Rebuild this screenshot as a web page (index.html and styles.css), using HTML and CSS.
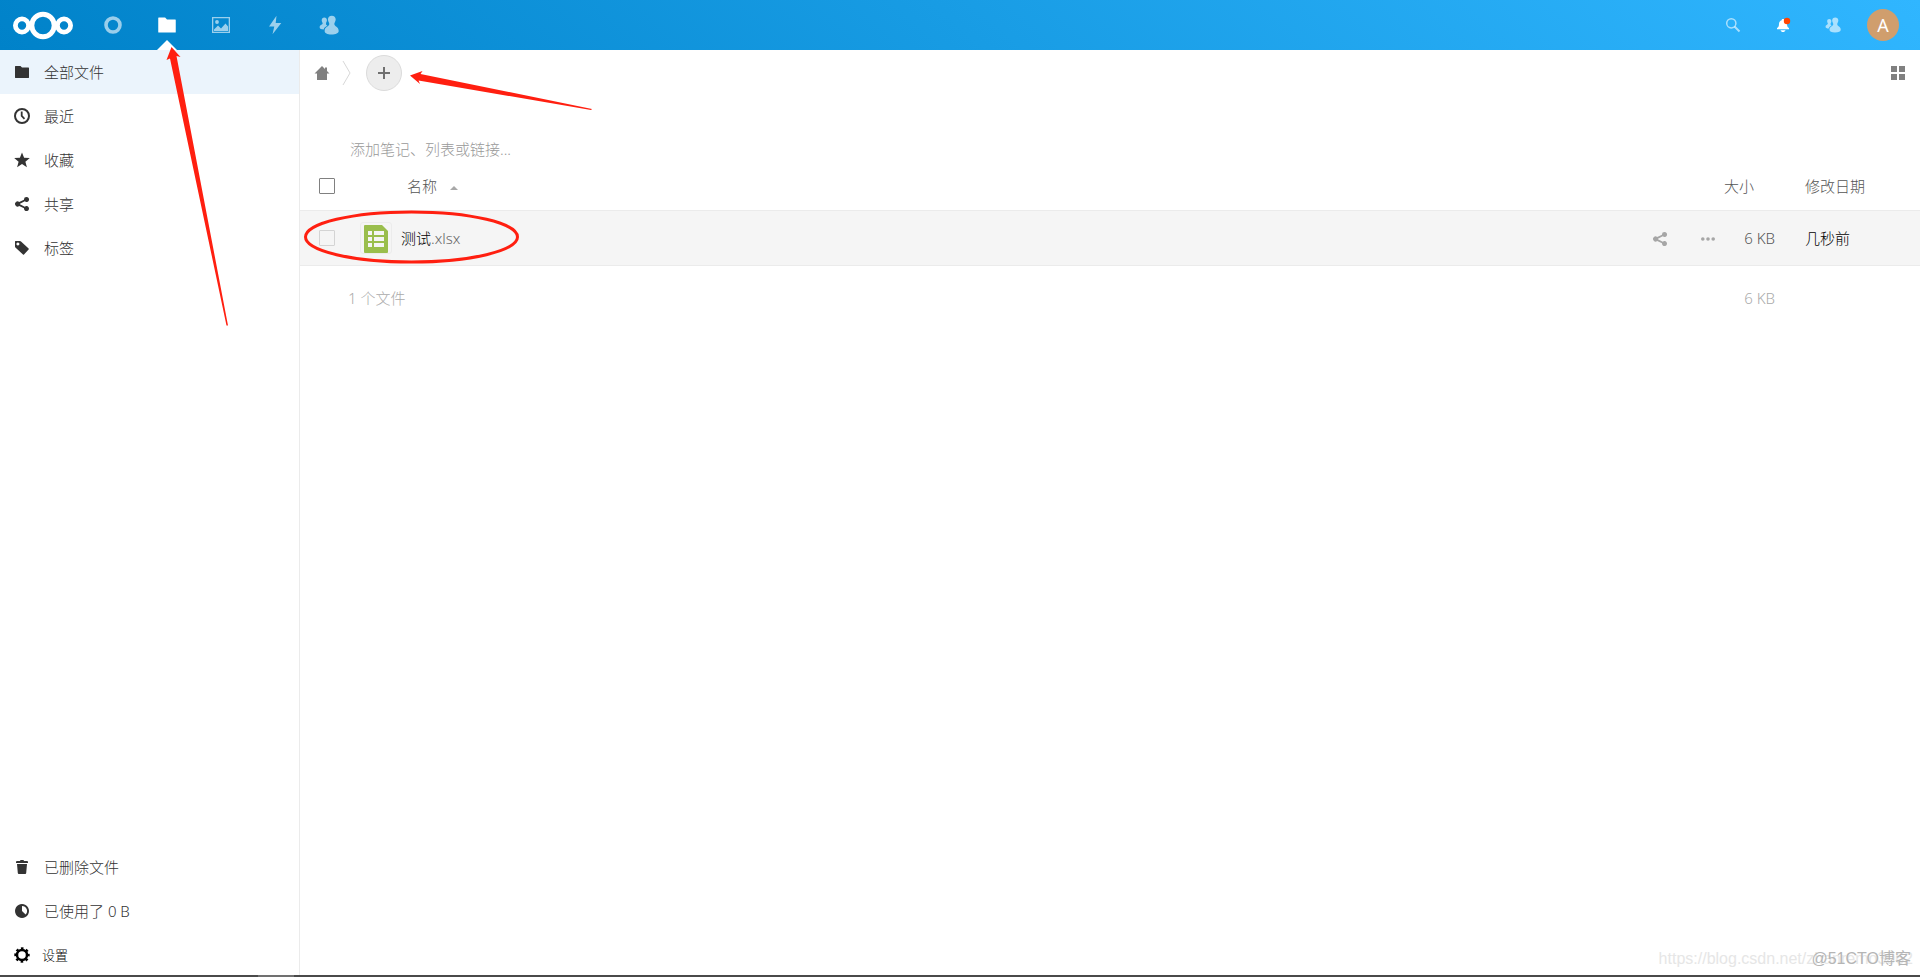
FILE: index.html
```html
<!DOCTYPE html>
<html lang="zh-CN">
<head>
<meta charset="utf-8">
<title>文件 - Nextcloud</title>
<link rel="stylesheet" href="styles.css">
</head>
<body>
<svg class="defs" aria-hidden="true">
  <symbol id="folder" viewBox="0 0 16 16"><path d="M1 2.400Q1 2 1.400 2H6.500L8 3.500h6.600q.4 0 .4.400v9.700q0 .4-.4.400H1.400Q1 14 1 13.600z"/></symbol>
  <symbol id="share" viewBox="0 0 16 16"><path d="M12.500 1a2.500 2.500 0 0 0-2.500 2.700L5.200 6.100a2.500 2.500 0 1 0 0 3.800l4.800 2.400a2.500 2.500 0 1 0 .8-1.600L6 8.300v-.6l4.800-2.400A2.500 2.500 0 1 0 12.500 1z"/></symbol>
  <symbol id="contacts" viewBox="0 0 32 32"><path d="M8.500 4C6 4 4.300 5.700 4.300 8.500c0 2.500 1.500 3.400 1.500 5C5.800 15.500 1 15.700 1 19.500 1 22 3.500 23 7.500 23c.5-3.200 3-4.700 5.800-6-.9-1-2.100-1.400-2.100-3.200 0-1.700 1.500-2.700 1.500-5.300C12.700 5.700 11 4 8.500 4z"/><path d="M20.500 1c-3.700 0-6.200 2.600-6.200 6 0 3.200 2.200 4.600 2.200 7.300C16.500 18.500 9 18 9 25.500 9 29 13 31 20 31s11.500-2 11.500-5.500c0-7.500-7-7-7-11.200 0-2.700 2.200-4.100 2.200-7.300 0-3.400-2.500-6-6.200-6z"/></symbol>
</svg>

<header class="topbar">
  <a class="logo" href="#" aria-label="Nextcloud">
    <svg viewBox="0 0 62 30" width="62" height="30"><g fill="none" stroke="#fff"><circle cx="31" cy="15.500" r="11.200" stroke-width="5"/><circle cx="10" cy="15.500" r="6.600" stroke-width="4.800"/><circle cx="52" cy="15.500" r="6.600" stroke-width="4.800"/></g></svg>
  </a>
  <nav class="apps" aria-label="应用">
    <a class="app" href="#" aria-label="主页"><svg viewBox="0 0 20 20"><circle cx="10" cy="10" r="7" fill="none" stroke="currentColor" stroke-width="3.600"/></svg></a>
    <a class="app app-active" href="#" aria-label="文件"><svg viewBox="0 0 16 16"><use href="#folder"/></svg></a>
    <a class="app" href="#" aria-label="照片"><svg viewBox="0 0 20 20"><path fill-rule="evenodd" d="M1 2h18v16H1zM2.300 3.300v13.400h15.400V3.300z"/><circle cx="6" cy="7" r="1.900"/><path d="M3 16v-1.500l4-4 3 3 4.500-5L17 11.500V16z"/></svg></a>
    <a class="app" href="#" aria-label="动态"><svg viewBox="0 0 20 20"><path d="M11.500.8 4 11.500h5.300L7.500 19.200 16.300 8h-5.600z"/></svg></a>
    <a class="app" href="#" aria-label="联系人"><svg viewBox="0 0 32 32"><use href="#contacts"/></svg></a>
  </nav>
  <div class="tools">
    <button class="tool" aria-label="搜索"><svg viewBox="0 0 16 16"><circle cx="6.300" cy="6.300" r="4.600" fill="none" stroke="currentColor" stroke-width="1.500"/><path d="m9.500 9.500 5 5" stroke="currentColor" stroke-width="2"/></svg></button>
    <button class="tool tool-bright" aria-label="通知"><svg viewBox="0 0 16 16"><path d="M8 2c-1 0-1.300.6-1.300 1.200C4.800 3.700 4 5.200 4 7c0 2.500-.8 3.200-2 4v1.200h12V11c-1.200-.8-2-1.500-2-4 0-1.800-.8-3.300-2.700-3.800C9.300 2.600 9 2 8 2zM5.500 13.200c.4 1.200 1.300 1.800 2.500 1.800s2.100-.6 2.500-1.800z"/><circle cx="12" cy="4" r="3.200" fill="#ff4402"/></svg></button>
    <button class="tool" aria-label="联系人菜单"><svg viewBox="0 0 32 32"><use href="#contacts"/></svg></button>
    <button class="avatar" aria-label="用户菜单">A</button>
  </div>
</header>

<div class="shell">
  <aside class="sidebar">
    <nav class="menu" aria-label="文件视图">
      <a class="item item-active" href="#"><svg viewBox="0 0 16 16"><use href="#folder"/></svg>全部文件</a>
      <a class="item" href="#"><svg viewBox="0 0 16 16"><g fill="none" stroke="currentColor"><circle cx="8" cy="8" r="7" stroke-width="2"/><path d="M7.700 3.500V8l2.800 2.800" stroke-width="1.800"/></g></svg>最近</a>
      <a class="item" href="#"><svg viewBox="0 0 16 16"><path d="m8 .5 2.100 5.300 5.700.3-4.400 3.600 1.500 5.500L8 12l-4.900 3.200 1.500-5.500L.2 6.100l5.700-.3z"/></svg>收藏</a>
      <a class="item" href="#"><svg viewBox="0 0 16 16"><use href="#share"/></svg>共享</a>
      <a class="item" href="#"><svg viewBox="0 0 16 16"><path fill-rule="evenodd" d="M1 1.500Q1 1 1.500 1H6q.6 0 1 .4L14.600 8.500q.5.500 0 1L10 14.600q-.5.500-1 0L1.400 7.500Q1 7 1 6.400zM3.900 2.500a1.500 1.500 0 1 0 .01 0z"/></svg>标签</a>
    </nav>
    <nav class="menu" aria-label="其他">
      <a class="item" href="#"><svg viewBox="0 0 16 16"><path d="M6.500 1 6 2H3q-1 0-1 1v1h12V3q0-1-1-1h-3L9.500 1zM3 5l.8 9q.1 1 1 1h6.400q.9 0 1-1l.8-9z"/></svg>已删除文件</a>
      <a class="item" href="#"><svg viewBox="0 0 16 16"><path fill-rule="evenodd" d="M8 1a7 7 0 1 0 .01 0zM8 3a5 5 0 0 1 3.600 8.500L8 8z"/></svg>已使用了 0 B</a>
      <button class="item settings" type="button"><svg viewBox="0 0 16 16"><circle cx="8" cy="8" r="5" fill="none" stroke="currentColor" stroke-width="2.500"/><circle cx="8" cy="8" r="6.600" fill="none" stroke="currentColor" stroke-width="2.200" stroke-dasharray="2.600 2.584" stroke-dashoffset="1.300"/></svg>设置</button>
    </nav>
  </aside>

  <main class="content">
    <div class="controls">
      <a class="home" href="#" aria-label="主目录"><svg viewBox="0 0 16 16"><path d="M8 1 .5 8.500H3V15h10V8.500h2.500L13 6V2.500h-2V4z"/></svg></a>
      <svg class="crumb" viewBox="0 0 10 26"><path d="m1 1 7 12-7 12" fill="none" stroke="#d8d8d8"/></svg>
      <button class="add" aria-label="新建"><svg viewBox="0 0 16 16"><path d="M7 2h2v5h5v2H9v5H7V9H2V7h5z"/></svg></button>
      <button class="grid-toggle" aria-label="切换网格视图"><svg viewBox="0 0 16 16"><path d="M1 1h6v6H1zM9 1h6v6H9zM1 9h6v6H1zM9 9h6v6H9z"/></svg></button>
    </div>
    <input class="note" type="text" aria-label="笔记" placeholder="添加笔记、列表或链接...">
    <table class="files">
      <thead>
        <tr>
          <th class="pick"><input type="checkbox" aria-label="全选"></th>
          <th class="name-head">名称<span class="sort"></span></th>
          <th class="actions"></th>
          <th class="size">大小</th>
          <th class="date">修改日期</th>
        </tr>
      </thead>
      <tbody>
        <tr>
          <td class="pick"><input class="faint" type="checkbox" aria-label="选择 测试.xlsx"></td>
          <td><a class="file" href="#"><span class="thumb"><svg viewBox="0 0 24 28"><path fill="#9abe4d" d="M1 0h17l6 6v21q0 1-1 1H1q-1 0-1-1V1q0-1 1-1z"/><path fill="#f5f5f5" d="M4 6h4v4H4zM10 6h10v4H10zM4 12h4v4H4zM10 12h10v4H10zM4 18h4v4H4zM10 18h10v4H10z"/></svg></span><span>测试<span class="ext">.xlsx</span></span></a></td>
          <td class="actions"><div class="action-row">
            <button aria-label="共享"><svg viewBox="0 0 16 16"><use href="#share"/></svg></button>
            <button aria-label="更多"><svg viewBox="0 0 16 16"><circle cx="2.800" cy="8" r="1.800"/><circle cx="8" cy="8" r="1.800"/><circle cx="13.200" cy="8" r="1.800"/></svg></button>
          </div></td>
          <td class="size">6 KB</td>
          <td class="date">几秒前</td>
        </tr>
      </tbody>
      <tfoot>
        <tr>
          <td class="pick"></td>
          <td class="summary" colspan="2">1 个文件</td>
          <td class="size">6 KB</td>
          <td class="date"></td>
        </tr>
      </tfoot>
    </table>
  </main>
</div>
<div class="strip"><span></span></div>

<svg class="marks" width="620" height="340" aria-hidden="true">
  <g fill="#ff1f10"><path d="M171.500 47 180.500 57 176.500 56 228 325.500 226.500 325.500 170 58.500 166.500 60z"/><path d="M410 75.500 422.500 71 420.500 74 592 109 591 110 418.500 80.500 420 84z"/></g>
  <ellipse cx="411.500" cy="237" rx="106" ry="25" fill="none" stroke="#ff1f10" stroke-width="3"/>
</svg>
<div class="watermark url">https://blog.csdn.net/zhanremo3062</div>
<div class="watermark blog">@51CTO博客</div>
</body>
</html>
```

FILE: styles.css
```css
* { box-sizing: border-box; }
body {
  margin: 0;
  min-height: 100vh;
  display: flex;
  flex-direction: column;
  position: relative;
  background: #fff;
  color: #000;
  font: 300 15px/20px "Noto Sans", "Noto Sans CJK SC", sans-serif;
}
a { color: inherit; text-decoration: none; }
button { padding: 0; border: 0; background: none; color: inherit; font: inherit; cursor: pointer; }
svg { display: block; fill: currentColor; }
input { font: inherit; }
.defs { position: absolute; width: 0; height: 0; }

.topbar {
  display: flex;
  height: 50px;
  padding: 0 21px 0 12px;
  background: linear-gradient(40deg, #0082c9 0%, #30b6ff 100%);
  color: #fff;
}
.logo { display: flex; align-items: center; width: 74px; }
.apps { display: flex; }
.app { position: relative; display: grid; place-items: center; width: 54px; color: rgba(255, 255, 255, 0.6); }
.app svg { width: 20px; height: 20px; }
.app-active { color: #fff; }
.app-active::after {
  content: "";
  position: absolute;
  bottom: 0;
  left: 17px;
  border: 10px solid transparent;
  border-top: 0;
  border-bottom-color: #fff;
}
.tools { display: flex; align-items: center; margin-left: auto; }
.tool { display: grid; place-items: center; width: 50px; height: 50px; color: rgba(255, 255, 255, 0.6); }
.tool svg { width: 16px; height: 16px; }
.tool-bright { color: #fff; }
.avatar { width: 32px; height: 32px; margin-left: 9px; border-radius: 50%; background: #d09e6d; font-size: 18px; font-weight: 400; }

.shell { display: flex; flex: 1; }
.sidebar {
  display: flex;
  flex-direction: column;
  justify-content: space-between;
  width: 300px;
  border-right: 1px solid #ebebeb;
}
.item { display: flex; align-items: center; gap: 14px; width: 100%; height: 44px; padding-left: 14px; color: #333; }
.item svg { width: 16px; height: 16px; color: #333; }
.item-active { background: #ebf4fc; }
.settings, .settings svg { color: #000; }
.settings { gap: 12px; font-size: 13px; }

.content { flex: 1; min-width: 0; }
.controls { display: flex; align-items: center; height: 45px; padding: 0 14px; color: #808080; }
.home svg, .grid-toggle svg, .add svg { width: 16px; height: 16px; }
.crumb { width: 10px; height: 26px; margin: 0 14px 0 12px; }
.add { display: grid; place-items: center; width: 36px; height: 36px; border: 1px solid #dbdbdb; border-radius: 50%; background: #ededed; color: #707070; }
.grid-toggle { margin-left: auto; }
.note { display: block; width: calc(100% - 50px); height: 30px; margin: 39px 0 0 50px; padding: 0; border: 0; outline: 0; background: none; }
.note::placeholder { color: #999; opacity: 1; }

.files { width: 100%; border-collapse: collapse; text-align: left; }
.files th, .files td { padding: 0; font-weight: 300; }
.files thead { color: #555; }
.files thead tr { height: 46px; }
.files thead th { padding-bottom: 2px; }
.files tbody tr { height: 55px; background: #f5f5f5; border: solid #ebebeb; border-width: 1px 0; }
.files tfoot tr { height: 66px; color: #aaa; }
.files .pick { width: 48px; padding-left: 19px; }
.pick input { display: block; appearance: none; width: 16px; height: 16px; margin: 0; border: 1px solid #808080; border-radius: 1px; background: #fff; }
.pick .faint { border-color: #d4d4d4; background: transparent; }
.files .name-head { padding-left: 59px; }
.sort { display: inline-block; margin: 0 0 2px 13px; border: 4px solid transparent; border-top: 0; border-bottom-color: #a8a8a8; }
.file { display: flex; align-items: center; gap: 9px; padding-left: 12px; }
.thumb { display: grid; place-items: end center; width: 32px; height: 32px; border: 1px solid #ececec; border-radius: 3px; }
.thumb svg { width: 24px; height: 28px; }
.ext { color: #666; }
.files .actions { width: 120px; }
.action-row { display: flex; gap: 32px; padding: 3px 0 0 52px; color: #a6a6a6; }
.action-row svg { width: 16px; height: 16px; }
.files .size { width: 55px; text-align: right; }
.files thead .size { padding-right: 21px; white-space: nowrap; }
.files tbody .size { color: #555; }
.files .date { width: 145px; padding-left: 30px; }

.strip { position: absolute; right: 0; bottom: 0; left: 0; height: 2px; background: #4a4a4a; }
.strip span { display: block; width: 36px; height: 2px; margin-left: 258px; background: #707070; }

.marks { position: absolute; top: 0; left: 0; pointer-events: none; }
.watermark { position: absolute; pointer-events: none; white-space: nowrap; font: 400 16px/20px "Liberation Sans", "Noto Sans CJK SC", sans-serif; }
.url { right: 7px; bottom: 8px; color: #e6e6e6; }
.blog { right: 9px; bottom: 8px; color: #b5b5b5; }
```
